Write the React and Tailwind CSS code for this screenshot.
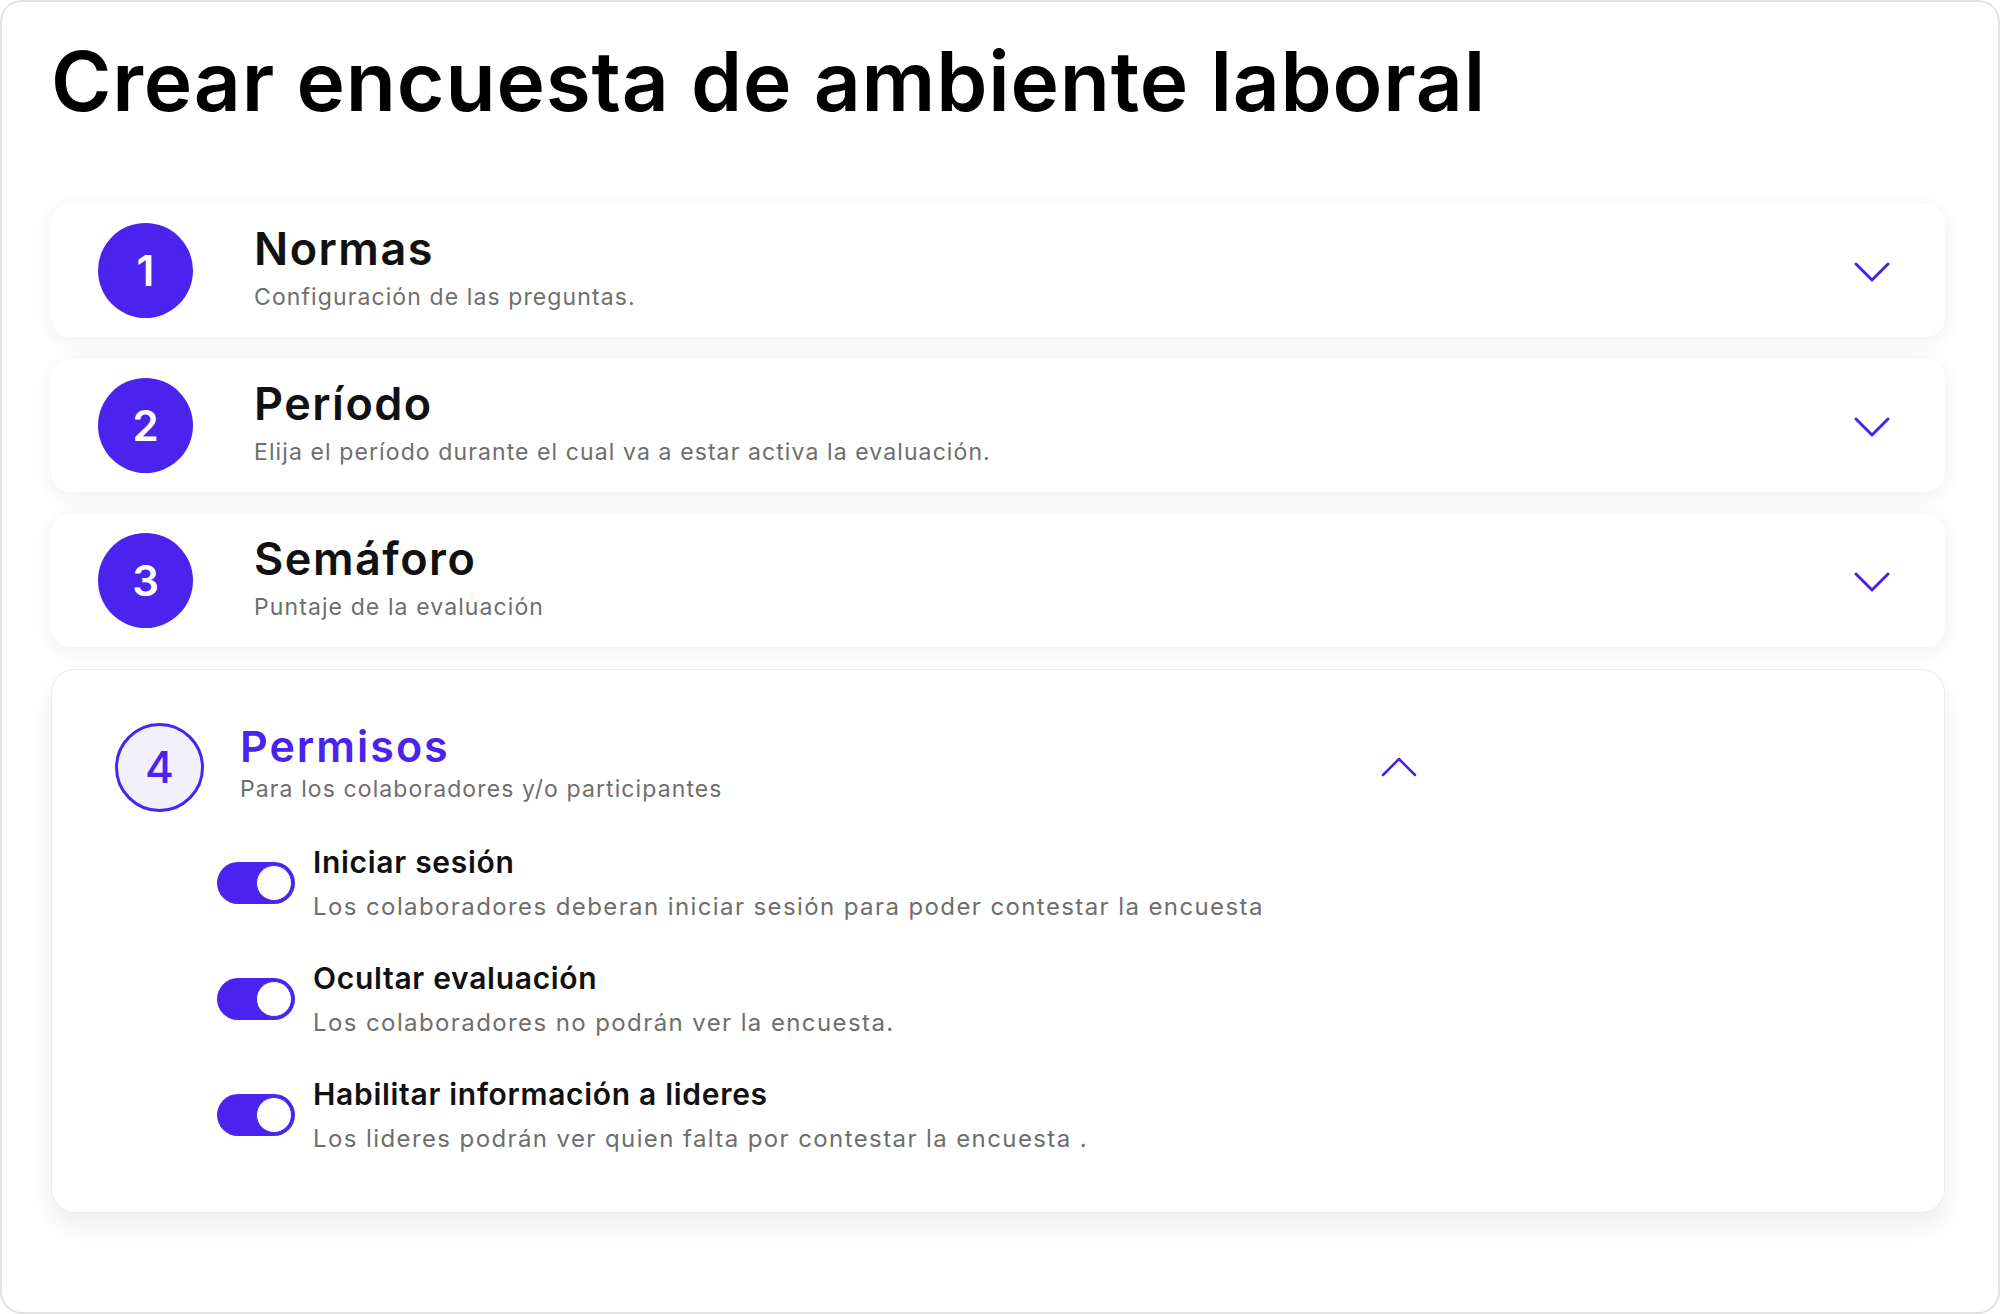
import React, { useState } from 'react';

const font = { fontFamily: 'Inter, "Noto Sans", sans-serif' };

function ChevronDown() {
  return (
    <svg width="36" height="21" viewBox="0 0 36 21" fill="none" className="mt-[4px]">
      <polyline points="2,2 18,18 34,2" stroke="#4a22e6" strokeWidth="3" strokeLinecap="round" strokeLinejoin="round" />
    </svg>
  );
}

function ChevronUp() {
  return (
    <svg width="36" height="20" viewBox="0 0 36 20" fill="none">
      <polyline points="2,18 18,2 34,18" stroke="#4a22e6" strokeWidth="2.5" strokeLinecap="round" strokeLinejoin="round" />
    </svg>
  );
}

function StepCard({ num, title, subtitle }) {
  return (
    <div className="flex h-[133px] items-center rounded-[20px] bg-white pl-[47px] pr-[55px] shadow-[0_4px_22px_rgba(40,40,90,0.07)]">
      <div className="flex h-[95px] w-[95px] shrink-0 items-center justify-center rounded-full bg-[#4b23ee] text-[42px] font-semibold text-white">
        {num}
      </div>
      <div className="mb-[5px] ml-[61px] flex-1">
        <div className="text-[45px] font-semibold leading-[48px] tracking-[1.5px] text-[#111111]">{title}</div>
        <div className="mt-[9px] text-[23px] leading-[30px] tracking-[1.1px] text-[#6e6e6e]">{subtitle}</div>
      </div>
      <ChevronDown />
    </div>
  );
}

function Toggle({ on, onClick }) {
  return (
    <button
      onClick={onClick}
      className={`mt-[18px] flex h-[42px] w-[78px] shrink-0 items-center rounded-full px-[3px] ${on ? 'justify-end bg-[#4b23ee]' : 'justify-start bg-gray-300'}`}
    >
      <span className="block h-[36px] w-[36px] rounded-full border border-[#4b23ee] bg-white" />
    </button>
  );
}

export default function App() {
  const [perms, setPerms] = useState([true, true, true]);

  const steps = [
    { num: 1, title: 'Normas', subtitle: 'Configuración de las preguntas.' },
    { num: 2, title: 'Período', subtitle: 'Elija el período durante el cual va a estar activa la evaluación.' },
    { num: 3, title: 'Semáforo', subtitle: 'Puntaje de la evaluación' },
  ];

  const options = [
    { label: 'Iniciar sesión', desc: 'Los colaboradores deberan iniciar sesión para poder contestar la encuesta' },
    { label: 'Ocultar evaluación', desc: 'Los colaboradores no podrán ver la encuesta.' },
    { label: 'Habilitar información a lideres', desc: 'Los lideres podrán ver quien falta por contestar la encuesta .' },
  ];

  const toggle = (i) => {
    const next = [...perms];
    next[i] = !next[i];
    setPerms(next);
  };

  return (
    <div style={font} className="h-[1314px] w-[2000px] rounded-[22px] border-2 border-[#e3e3e3] bg-white pl-[49px] pr-[53px] pt-[39px]">
      <h1 className="text-[82px] font-semibold leading-[82px] tracking-[0.8px] text-black">
        Crear encuesta de ambiente laboral
      </h1>

      <div className="mt-[81px] flex flex-col gap-[22px]">
        {steps.map((s) => (
          <StepCard key={s.num} {...s} />
        ))}

        <div className="rounded-[24px] border border-[#ececec] bg-white pb-[58px] pl-[63px] pt-[52px] shadow-[0_14px_26px_rgba(0,0,0,0.07)]">
          <div className="flex w-[1302px] items-center">
            <div className="flex h-[89px] w-[89px] shrink-0 items-center justify-center rounded-full border-[3px] border-[#4b23ee] bg-[#f3f0fe] text-[44px] font-medium text-[#4b23ee]">
              4
            </div>
            <div className="mb-[8px] ml-[36px] flex-1">
              <div className="text-[43px] font-semibold leading-[48px] tracking-[2px] text-[#4b23ee]">Permisos</div>
              <div className="mt-[4px] text-[23px] leading-[30px] tracking-[1.1px] text-[#6e6e6e]">Para los colaboradores y/o participantes</div>
            </div>
            <ChevronUp />
          </div>

          <div className="ml-[102px] mt-[32px] flex flex-col gap-[38px]">
            {options.map((o, i) => (
              <div key={o.label} className="flex items-start">
                <Toggle on={perms[i]} onClick={() => toggle(i)} />
                <div className="ml-[18px]">
                  <div className="text-[30px] font-semibold leading-[36px] tracking-[0.7px] text-[#111111]">{o.label}</div>
                  <div className="mt-[12px] text-[24px] leading-[30px] tracking-[1.4px] text-[#6e6e6e]">{o.desc}</div>
                </div>
              </div>
            ))}
          </div>
        </div>
      </div>
    </div>
  );
}
